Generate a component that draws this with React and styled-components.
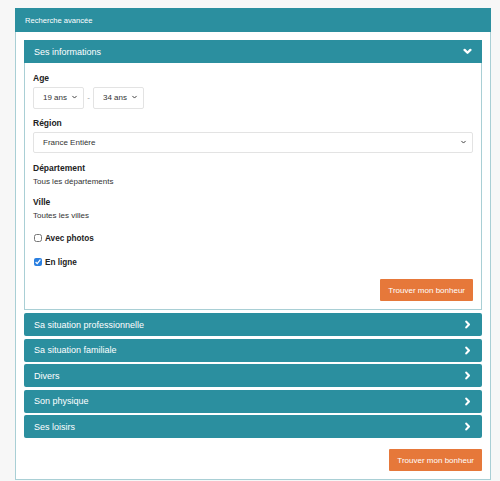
import React, { useState } from 'react';
import styled, { createGlobalStyle } from 'styled-components';

const GlobalStyle = createGlobalStyle`
  html, body {
    margin: 0;
    padding: 0;
    background-color: #f7f7f7;
    font-family: "Liberation Sans", Arial, sans-serif;
    color: #333;
  }
`;

const TEAL = '#2b8f9f';
const LIGHT_BORDER = '#a9cfd5';
const ORANGE = '#e6783a';

const Page = styled.div`
  padding: 8px 9px 0 15px;
`;

const Panel = styled.section`
  background-color: #fff;
  border: 1px solid ${LIGHT_BORDER};
  border-top: none;
`;

const PanelHeader = styled.div`
  height: 24px;
  display: flex;
  align-items: center;
  padding-left: 10px;
  background-color: ${TEAL};
  color: #fff;
  font-size: 7.6px;
  margin: 0 -1px;
`;

const PanelBody = styled.div`
  padding: 8px;
  display: flex;
  flex-direction: column;
`;

const Box = styled.div`
  border: 1px solid ${LIGHT_BORDER};
  border-top: none;
  background-color: #fff;
`;

const AccordionHeader = styled.button`
  width: 100%;
  height: 23px;
  display: flex;
  align-items: center;
  justify-content: space-between;
  padding: 0 10px 0 10px;
  border: none;
  border-radius: 2px;
  background-color: ${TEAL};
  color: #fff;
  font-family: inherit;
  font-size: 9px;
  cursor: pointer;
  margin-top: ${({ $gap }) => $gap || 0}px;

  svg {
    width: 9px;
    height: 9px;
    flex-shrink: 0;
  }
`;

const BoxHeader = styled(AccordionHeader)`
  border-radius: 0;
  margin: 0 -1px;
  width: calc(100% + 2px);
`;

const BoxContent = styled.div`
  padding: 8px;
  display: flex;
  flex-direction: column;
`;

const Label = styled.div`
  font-size: 8.5px;
  font-weight: 700;
  line-height: 14px;
  color: #222;
  margin-top: ${({ $gap }) => $gap || 0}px;
`;

const Value = styled.div`
  font-size: 8px;
  line-height: 14px;
  color: #333;
`;

const Row = styled.div`
  display: flex;
  align-items: center;
  margin-top: 1px;
`;

const Dash = styled.span`
  font-size: 8px;
  color: #999;
  width: 9px;
  text-align: center;
`;

const SelectWrap = styled.div`
  position: relative;
  width: ${({ $w }) => ($w ? `${$w}px` : '100%')};
  height: ${({ $h }) => $h || 22}px;
  margin-top: ${({ $gap }) => $gap || 0}px;

  svg {
    position: absolute;
    right: 6px;
    top: 50%;
    transform: translateY(-50%);
    width: 7px;
    height: 7px;
    pointer-events: none;
  }
`;

const Select = styled.select`
  appearance: none;
  width: 100%;
  height: 100%;
  box-sizing: border-box;
  border: 1px solid #e3e3e3;
  border-radius: 2px;
  background-color: #fff;
  padding: 0 0 0 9px;
  font-family: inherit;
  font-size: 8px;
  color: #333;
  outline: none;
`;

const Check = styled.label`
  display: flex;
  align-items: center;
  height: 14px;
  font-size: 8.2px;
  font-weight: 700;
  color: #222;
  margin-top: ${({ $gap }) => $gap || 0}px;

  input {
    width: 8px;
    height: 8px;
    margin: 0 3px 0 1px;
    accent-color: #2a7fe0;
  }
`;

const Actions = styled.div`
  display: flex;
  justify-content: flex-end;
  margin-top: ${({ $gap }) => $gap || 0}px;
`;

const OrangeButton = styled.button`
  height: 22px;
  padding: 0 8px;
  border: none;
  border-radius: 1px;
  background-color: ${ORANGE};
  color: #fff;
  font-family: inherit;
  font-size: 8px;
  cursor: pointer;
  min-width: 92px;
`;

// small thin caret used inside the selects
const SelectCaret = () => (
  <svg viewBox="0 0 10 10" fill="none" stroke="#333" strokeWidth="1.3">
    <path d="M2 3.5 L5 6.5 L8 3.5" />
  </svg>
);

// chunky chevrons like the font-awesome ones in the headers
const ChevronDown = () => (
  <svg viewBox="0 0 10 10" fill="none" stroke="#fff" strokeWidth="2.6" strokeLinecap="round" strokeLinejoin="round">
    <path d="M1.8 3.2 L5 6.4 L8.2 3.2" />
  </svg>
);

const ChevronRight = () => (
  <svg viewBox="0 0 10 10" fill="none" stroke="#fff" strokeWidth="2.4" strokeLinecap="round" strokeLinejoin="round">
    <path d="M3.6 1.8 L6.6 5 L3.6 8.2" />
  </svg>
);

const sections = [
  'Sa situation professionnelle',
  'Sa situation familiale',
  'Divers',
  'Son physique',
  'Ses loisirs',
];

const App = () => {
  const [photos, setPhotos] = useState(false);
  const [online, setOnline] = useState(true);

  return (
    <Page>
      <GlobalStyle />
      <Panel>
        <PanelHeader>Recherche avancée</PanelHeader>
        <PanelBody>
          <Box>
            <BoxHeader>
              <span>Ses informations</span>
              <ChevronDown />
            </BoxHeader>
            <BoxContent>
              <Label>Age</Label>
              <Row>
                <SelectWrap $w={51}>
                  <Select defaultValue="19">
                    <option value="19">19 ans</option>
                  </Select>
                  <SelectCaret />
                </SelectWrap>
                <Dash>-</Dash>
                <SelectWrap $w={51}>
                  <Select defaultValue="34">
                    <option value="34">34 ans</option>
                  </Select>
                  <SelectCaret />
                </SelectWrap>
              </Row>

              <Label $gap={8}>Région</Label>
              <SelectWrap $h={21} $gap={1}>
                <Select defaultValue="fr">
                  <option value="fr">France Entière</option>
                </Select>
                <SelectCaret />
              </SelectWrap>

              <Label $gap={9}>Département</Label>
              <Value>Tous les départements</Value>

              <Label $gap={6}>Ville</Label>
              <Value>Toutes les villes</Value>

              <Check $gap={8}>
                <input type="checkbox" checked={photos} onChange={() => setPhotos(!photos)} />
                Avec photos
              </Check>
              <Check $gap={10}>
                <input type="checkbox" checked={online} onChange={() => setOnline(!online)} />
                En ligne
              </Check>

              <Actions $gap={10}>
                <OrangeButton>Trouver mon bonheur</OrangeButton>
              </Actions>
            </BoxContent>
          </Box>

          {sections.map((title, i) => (
            <AccordionHeader key={title} $gap={i === 0 ? 3 : 2.5}>
              <span>{title}</span>
              <ChevronRight />
            </AccordionHeader>
          ))}

          <Actions $gap={11}>
            <OrangeButton>Trouver mon bonheur</OrangeButton>
          </Actions>
        </PanelBody>
      </Panel>
    </Page>
  );
};

export default App;
